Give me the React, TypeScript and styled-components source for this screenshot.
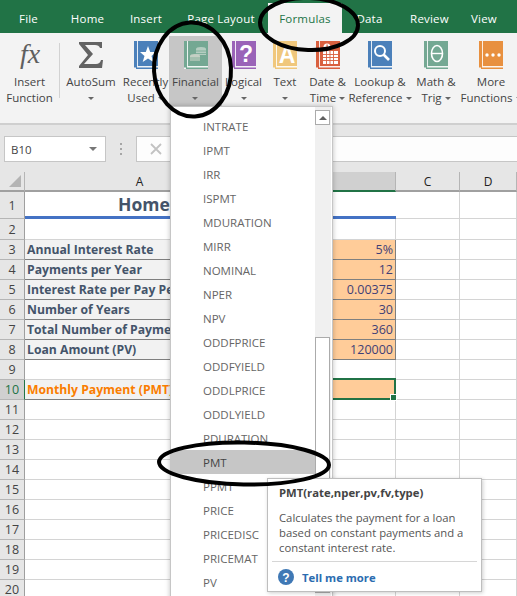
import React from 'react';
import styled, { createGlobalStyle } from 'styled-components';

const GlobalStyle = createGlobalStyle`
  html, body {
    margin: 0;
    padding: 0;
    background: #ffffff;
  }
`;

const Page = styled.div`
  position: relative;
  width: 517px;
  height: 596px;
  overflow: hidden;
  font-family: 'Open Sans', 'Noto Sans', sans-serif;
`;

const TabBar = styled.div`
  display: flex;
  align-items: flex-end;
  height: 33px;
  background-color: #217346;
`;

const Tab = styled.div<{ $width: number; $active?: boolean }>`
  width: ${(p) => p.$width}px;
  height: 30px;
  display: flex;
  align-items: center;
  justify-content: center;
  font-size: 11.5px;
  letter-spacing: 0.2px;
  color: ${(p) => (p.$active ? '#217346' : '#ffffff')};
  background-color: ${(p) => (p.$active ? '#f3f3f3' : 'transparent')};
`;

const Ribbon = styled.div`
  display: flex;
  height: 92px;
  padding-top: 3px;
  box-sizing: border-box;
  background-color: #f3f3f3;
  border-bottom: 2px solid #cfcfcf;
`;

const Command = styled.div<{ $width: number; $active?: boolean }>`
  flex: none;
  width: ${(p) => p.$width}px;
  height: 70px;
  padding-top: 5px;
  box-sizing: border-box;
  display: flex;
  flex-direction: column;
  align-items: center;
  background-color: ${(p) => (p.$active ? '#c6c6c6' : 'transparent')};
`;

const CommandIcon = styled.div`
  height: 29px;
  display: flex;
  align-items: flex-start;
  justify-content: center;
`;

const CommandLabel = styled.div`
  margin-top: 4px;
  font-size: 11.5px;
  line-height: 16px;
  color: #444444;
  text-align: center;
  white-space: nowrap;
`;

const Caret = styled.span<{ $own?: boolean }>`
  display: ${(p) => (p.$own ? 'block' : 'inline-block')};
  width: 0;
  height: 0;
  margin: ${(p) => (p.$own ? '7px auto 0' : '0 0 2px 3px')};
  border-left: 3px solid transparent;
  border-right: 3px solid transparent;
  border-top: 3px solid #666666;
`;

const RibbonDivider = styled.div`
  flex: none;
  width: 1px;
  height: 55px;
  margin-top: 7px;
  background-color: #d2d2d2;
`;

const FormulaBar = styled.div`
  display: flex;
  align-items: flex-start;
  height: 47px;
  padding: 11px 0 0 4px;
  box-sizing: border-box;
  background-color: #e6e6e6;
`;

const NameBox = styled.div`
  width: 102px;
  height: 26px;
  box-sizing: border-box;
  border: 1px solid #c6c6c6;
  background-color: #ffffff;
  display: flex;
  align-items: center;
  justify-content: space-between;
  padding: 0 8px 0 6px;
  font-size: 11.5px;
  color: #444444;
`;

const NameCaret = styled.span`
  width: 0;
  height: 0;
  border-left: 4px solid transparent;
  border-right: 4px solid transparent;
  border-top: 4px solid #777777;
`;

const GripDots = styled.div`
  width: 30px;
  height: 26px;
  display: flex;
  flex-direction: column;
  align-items: center;
  justify-content: center;
  gap: 3px;
`;

const GripDot = styled.span`
  width: 2px;
  height: 2px;
  background-color: #a6a6a6;
`;

const FormulaInput = styled.div`
  flex: 1;
  height: 26px;
  box-sizing: border-box;
  border: 1px solid #c6c6c6;
  border-right: none;
  background-color: #fdfdfd;
  display: flex;
  align-items: center;
  padding-left: 13px;
`;

const Sheet = styled.div`
  display: grid;
  grid-template-columns: 25px 230px 141px 64px 57px;
  grid-template-rows: 20px 27px 21px repeat(18, 20px);
`;

const Corner = styled.div`
  position: relative;
  background-color: #e6e6e6;
  border-right: 1px solid #b5b5b5;
  border-bottom: 2px solid #a0a0a0;
  box-sizing: border-box;
`;

const CornerMark = styled.span`
  position: absolute;
  right: 3px;
  bottom: 3px;
  width: 0;
  height: 0;
  border-left: 12px solid transparent;
  border-bottom: 12px solid #b4b4b4;
`;

const ColumnHead = styled.div<{ $selected?: boolean }>`
  box-sizing: border-box;
  display: flex;
  align-items: center;
  justify-content: center;
  font-size: 12px;
  color: #222222;
  background-color: ${(p) => (p.$selected ? '#d0d0d0' : '#e6e6e6')};
  border-right: 1px solid #b5b5b5;
  border-bottom: 2px solid ${(p) => (p.$selected ? '#217346' : '#a0a0a0')};
`;

const RowHead = styled.div<{ $selected?: boolean }>`
  box-sizing: border-box;
  display: flex;
  align-items: center;
  justify-content: center;
  font-size: 12.5px;
  color: ${(p) => (p.$selected ? '#217346' : '#444444')};
  background-color: ${(p) => (p.$selected ? '#d0d0d0' : '#e6e6e6')};
  border-bottom: 1px solid #b5b5b5;
  border-right: ${(p) => (p.$selected ? '1px solid #217346' : '1px solid #9f9f9f')};
`;

const Cell = styled.div`
  box-sizing: border-box;
  border-right: 1px solid #d4d4d4;
  border-bottom: 1px solid #d4d4d4;
`;

const TitleCell = styled(Cell)`
  border-right: none;
  border-bottom: 3px solid #4472c4;
  display: flex;
  align-items: center;
  padding-left: 93px;
  font-size: 17.5px;
  font-weight: 700;
  color: #44546a;
`;

const LabelCell = styled(Cell)<{ $orange?: boolean }>`
  display: flex;
  align-items: center;
  padding-left: 2px;
  overflow: hidden;
  white-space: nowrap;
  font-size: 12.2px;
  font-weight: 700;
  border-right: none;
  background-color: #f2f2f2;
  border-bottom: 1px solid #7f7f7f;
  color: ${(p) => (p.$orange ? '#fa7d00' : '#44546a')};
`;

const ValueCell = styled(Cell)`
  display: flex;
  align-items: center;
  justify-content: flex-end;
  padding-right: 2px;
  font-size: 12.5px;
  color: #3f3f76;
  background-color: #ffcc99;
  border-right: 1px solid #7f7f7f;
  border-bottom: 1px solid #7f7f7f;
`;

const ActiveCell = styled(ValueCell)`
  position: relative;
`;

const Selection = styled.div`
  position: absolute;
  left: -1px;
  right: -1px;
  top: -2px;
  bottom: -1px;
  border: 2px solid #217346;
`;

const FillHandle = styled.span`
  position: absolute;
  right: -3px;
  bottom: -3px;
  width: 5px;
  height: 5px;
  background-color: #217346;
  border: 1px solid #ffffff;
`;

const Menu = styled.div`
  position: absolute;
  left: 170px;
  top: 106px;
  width: 163px;
  height: 500px;
  box-sizing: border-box;
  display: flex;
  background-color: #ffffff;
  border: 1px solid #c6c6c6;
  box-shadow: 0 0 5px rgba(0, 0, 0, 0.25);
`;

const MenuList = styled.div`
  flex: 1;
  padding-top: 7px;
`;

const MenuItem = styled.div<{ $active?: boolean }>`
  height: 24px;
  display: flex;
  align-items: center;
  padding-left: 32px;
  font-size: 11.5px;
  color: ${(p) => (p.$active ? '#444444' : '#666666')};
  background-color: ${(p) => (p.$active ? '#c6c6c6' : 'transparent')};
`;

const ScrollTrack = styled.div`
  flex: none;
  width: 16px;
  margin-right: 1px;
  padding-top: 3px;
  background-color: #f0f0f0;
`;

const ScrollButton = styled.div`
  width: 15px;
  height: 15px;
  box-sizing: border-box;
  border: 1px solid #ababab;
  background-color: #ffffff;
  display: flex;
  align-items: center;
  justify-content: center;
`;

const ScrollArrow = styled.span`
  width: 0;
  height: 0;
  border-left: 4px solid transparent;
  border-right: 4px solid transparent;
  border-bottom: 4px solid #606060;
`;

const ScrollThumb = styled.div`
  width: 15px;
  height: 256px;
  margin-top: 212px;
  box-sizing: border-box;
  border: 1px solid #ababab;
  background-color: #ffffff;
`;

const Tooltip = styled.div`
  position: absolute;
  left: 267px;
  top: 478px;
  width: 215px;
  height: 114px;
  box-sizing: border-box;
  padding: 6px 4px 0;
  background-color: #ffffff;
  border: 1px solid #bebebe;
  box-shadow: 1px 1px 4px rgba(0, 0, 0, 0.2);
  color: #555555;
`;

const TooltipTitle = styled.div`
  padding-left: 7px;
  font-size: 11.3px;
  line-height: 16px;
  font-weight: 700;
  color: #444444;
  white-space: nowrap;
`;

const TooltipBody = styled.div`
  margin-top: 9px;
  padding-left: 7px;
  font-size: 11.3px;
  line-height: 15px;
  white-space: nowrap;
`;

const TooltipFooter = styled.div`
  display: flex;
  align-items: center;
  gap: 8px;
  margin-top: 6px;
  padding: 7px 0 0 6px;
  border-top: 1px solid #d6d6d6;
  font-size: 11.3px;
  font-weight: 700;
  color: #2b6cb0;
`;

const Annotations = styled.svg`
  position: absolute;
  left: 0;
  top: 0;
  pointer-events: none;
`;

const BookIcon = ({ color, children }: { color: string; children?: React.ReactNode }) => (
  <svg width="24" height="28" viewBox="0 0 24 28">
    <rect x="0" y="0" width="24" height="28" fill={color} />
    <rect x="3" y="0" width="1" height="25" fill="#ffffff" fillOpacity="0.85" />
    <rect x="3" y="25" width="21" height="1.5" fill="#ffffff" fillOpacity="0.9" />
    <rect x="0" y="26.5" width="2" height="1.5" fill="#f3f3f3" />
    {children}
  </svg>
);

const GlyphText = ({ children, size, y }: { children: string; size: number; y: number }) => (
  <text
    x="14"
    y={y}
    textAnchor="middle"
    fontFamily="'Liberation Sans', sans-serif"
    fontWeight="700"
    fontSize={size}
    fill="#ffffff"
  >
    {children}
  </text>
);

const commands = [
  { w: 62, lines: ['AutoSum'], icon: 'sigma' },
  { w: 47, lines: ['Recently', 'Used'], icon: 'star' },
  { w: 53, lines: ['Financial'], icon: 'coins', active: true },
  { w: 43, lines: ['Logical'], icon: 'question' },
  { w: 40, lines: ['Text'], icon: 'letter' },
  { w: 45, lines: ['Date &', 'Time'], icon: 'calendar' },
  { w: 60, lines: ['Lookup &', 'Reference'], icon: 'lens' },
  { w: 52, lines: ['Math &', 'Trig'], icon: 'theta' },
  { w: 58, lines: ['More', 'Functions'], icon: 'dots' }
];

const renderIcon = (name: string) => {
  switch (name) {
    case 'sigma':
      return (
        <svg width="26" height="28" viewBox="0 0 26 28">
          <path d="M1 1 H24 V7 H22 Q21 4 17 4 H7 L15 13 L6 23 H18 Q22 23 23 19 H25 L24 27 H1 V25 L10 14 L1 3 Z" fill="#636363" />
        </svg>
      );
    case 'star':
      return (
        <BookIcon color="#4b80ba">
          <polygon points="14,5 16.2,11 22,11 17.5,15 19.3,21 14,17.4 8.7,21 10.5,15 6,11 11.8,11" fill="#ffffff" />
        </BookIcon>
      );
    case 'coins':
      return (
        <BookIcon color="#74a893">
          <ellipse cx="17" cy="8" rx="5" ry="2" fill="#b5cdc1" />
          <rect x="12" y="8" width="10" height="6" fill="#b5cdc1" />
          <path d="M12 10 H22 M12 12.5 H22" stroke="#74a893" strokeWidth="0.8" />
          <ellipse cx="11" cy="15" rx="5" ry="2" fill="#c4cfc4" />
          <rect x="6" y="15" width="10" height="5" fill="#c4cfc4" />
          <path d="M6 17 H16 M6 19 H16" stroke="#74a893" strokeWidth="0.8" />
        </BookIcon>
      );
    case 'question':
      return (
        <BookIcon color="#9a63b8">
          <GlyphText size={23} y={21}>?</GlyphText>
        </BookIcon>
      );
    case 'letter':
      return (
        <BookIcon color="#f0c77c">
          <GlyphText size={23} y={22}>A</GlyphText>
        </BookIcon>
      );
    case 'calendar':
      return (
        <BookIcon color="#d9603f">
          <circle cx="11" cy="6" r="3.5" fill="#ffffff" />
          <rect x="10.5" y="3.5" width="1.2" height="3" fill="#d9603f" />
          <rect x="7" y="10" width="15" height="13" fill="#ffffff" />
          <path d="M7 13.5 H22 M7 16.5 H22 M7 19.5 H22 M10.5 10 V23 M14 10 V23 M17.5 10 V23" stroke="#d9603f" strokeWidth="0.9" />
        </BookIcon>
      );
    case 'lens':
      return (
        <BookIcon color="#4b80ba">
          <circle cx="12" cy="10" r="5" fill="none" stroke="#ffffff" strokeWidth="2" />
          <path d="M15.5 13.5 L21 19" stroke="#ffffff" strokeWidth="2.6" />
        </BookIcon>
      );
    case 'theta':
      return (
        <BookIcon color="#74a893">
          <ellipse cx="13" cy="12.5" rx="5.5" ry="8" fill="none" stroke="#ffffff" strokeWidth="1.6" />
          <path d="M7.5 12.5 H18.5" stroke="#ffffff" strokeWidth="1.4" />
        </BookIcon>
      );
    default:
      return (
        <BookIcon color="#e8903f">
          <circle cx="8" cy="14" r="1.7" fill="#ffffff" />
          <circle cx="14" cy="14" r="1.7" fill="#ffffff" />
          <circle cx="20" cy="14" r="1.7" fill="#ffffff" />
        </BookIcon>
      );
  }
};

const tabs = [
  { label: 'File', w: 57 },
  { label: 'Home', w: 61 },
  { label: 'Insert', w: 56 },
  { label: 'Page Layout', w: 94 },
  { label: 'Formulas', w: 74, active: true },
  { label: 'Data', w: 55 },
  { label: 'Review', w: 65 },
  { label: 'View', w: 44 }
];

const functions = [
  'INTRATE', 'IPMT', 'IRR', 'ISPMT', 'MDURATION', 'MIRR', 'NOMINAL', 'NPER', 'NPV', 'ODDFPRICE',
  'ODDFYIELD', 'ODDLPRICE', 'ODDLYIELD', 'PDURATION', 'PMT', 'PPMT', 'PRICE', 'PRICEDISC', 'PRICEMAT', 'PV'
];

const inputs: { [row: number]: [string, string] } = {
  3: ['Annual Interest Rate', '5%'],
  4: ['Payments per Year', '12'],
  5: ['Interest Rate per Pay Period', '0.00375'],
  6: ['Number of Years', '30'],
  7: ['Total Number of Payments', '360'],
  8: ['Loan Amount (PV)', '120000']
};

const rowNumbers = Array.from({ length: 20 }, (_, i) => i + 1);

const renderRow = (n: number) => {
  const input = inputs[n];
  let a = <Cell />;
  let b = <Cell />;
  if (n === 1) {
    a = <TitleCell>Home</TitleCell>;
    b = <TitleCell />;
  } else if (input) {
    a = <LabelCell>{input[0]}</LabelCell>;
    b = <ValueCell>{input[1]}</ValueCell>;
  } else if (n === 10) {
    a = <LabelCell $orange>Monthly Payment (PMT)</LabelCell>;
    b = (
      <ActiveCell>
        <Selection>
          <FillHandle />
        </Selection>
      </ActiveCell>
    );
  }
  return (
    <React.Fragment key={n}>
      <RowHead $selected={n === 10}>{n}</RowHead>
      {a}
      {b}
      <Cell />
      <Cell />
    </React.Fragment>
  );
};

export default function App() {
  return (
    <Page>
      <GlobalStyle />
      <TabBar>
        {tabs.map((t) => (
          <Tab key={t.label} $width={t.w} $active={t.active}>
            {t.label}
          </Tab>
        ))}
      </TabBar>
      <Ribbon>
        <Command $width={59}>
          <CommandIcon>
            <svg width="36" height="29" viewBox="0 0 36 29">
              <text x="18" y="22" textAnchor="middle" fontFamily="'Liberation Serif', serif" fontStyle="italic" fontSize="28" fill="#5f5f5f">
                fx
              </text>
            </svg>
          </CommandIcon>
          <CommandLabel>
            Insert
            <br />
            Function
          </CommandLabel>
        </Command>
        <RibbonDivider />
        {commands.map((c) => (
          <Command key={c.lines[0]} $width={c.w} $active={c.active}>
            <CommandIcon>{renderIcon(c.icon)}</CommandIcon>
            <CommandLabel>
              {c.lines[0]}
              <br />
              {c.lines[1]}
              <Caret $own={c.lines.length === 1} />
            </CommandLabel>
          </Command>
        ))}
      </Ribbon>
      <FormulaBar>
        <NameBox>
          B10
          <NameCaret />
        </NameBox>
        <GripDots>
          <GripDot />
          <GripDot />
          <GripDot />
        </GripDots>
        <FormulaInput>
          <svg width="12" height="12" viewBox="0 0 12 12">
            <path d="M1 1 L11 11 M11 1 L1 11" stroke="#c2c2c2" strokeWidth="1.8" />
          </svg>
        </FormulaInput>
      </FormulaBar>
      <Sheet>
        <Corner>
          <CornerMark />
        </Corner>
        <ColumnHead>A</ColumnHead>
        <ColumnHead $selected>B</ColumnHead>
        <ColumnHead>C</ColumnHead>
        <ColumnHead>D</ColumnHead>
        {rowNumbers.map(renderRow)}
      </Sheet>
      <Menu>
        <MenuList>
          {functions.map((f) => (
            <MenuItem key={f} $active={f === 'PMT'}>
              {f}
            </MenuItem>
          ))}
        </MenuList>
        <ScrollTrack>
          <ScrollButton>
            <ScrollArrow />
          </ScrollButton>
          <ScrollThumb />
        </ScrollTrack>
      </Menu>
      <Tooltip>
        <TooltipTitle>PMT(rate,nper,pv,fv,type)</TooltipTitle>
        <TooltipBody>
          Calculates the payment for a loan
          <br />
          based on constant payments and a
          <br />
          constant interest rate.
        </TooltipBody>
        <TooltipFooter>
          <svg width="16" height="16" viewBox="0 0 16 16">
            <circle cx="8" cy="8" r="8" fill="#3f78b5" />
            <text x="8" y="12.5" textAnchor="middle" fontFamily="'Liberation Sans', sans-serif" fontWeight="700" fontSize="12" fill="#ffffff">
              ?
            </text>
          </svg>
          Tell me more
        </TooltipFooter>
      </Tooltip>
      <Annotations width="517" height="596" viewBox="0 0 517 596">
        <g fill="none" stroke="#000000" strokeWidth="4">
          <ellipse cx="192.5" cy="69.5" rx="38.5" ry="47" transform="rotate(-3 192.5 69.5)" />
          <ellipse cx="309" cy="24" rx="49" ry="26" transform="rotate(2 309 24)" />
          <ellipse cx="244" cy="463.5" rx="85" ry="21" transform="rotate(1 244 463.5)" />
        </g>
      </Annotations>
    </Page>
  );
}
